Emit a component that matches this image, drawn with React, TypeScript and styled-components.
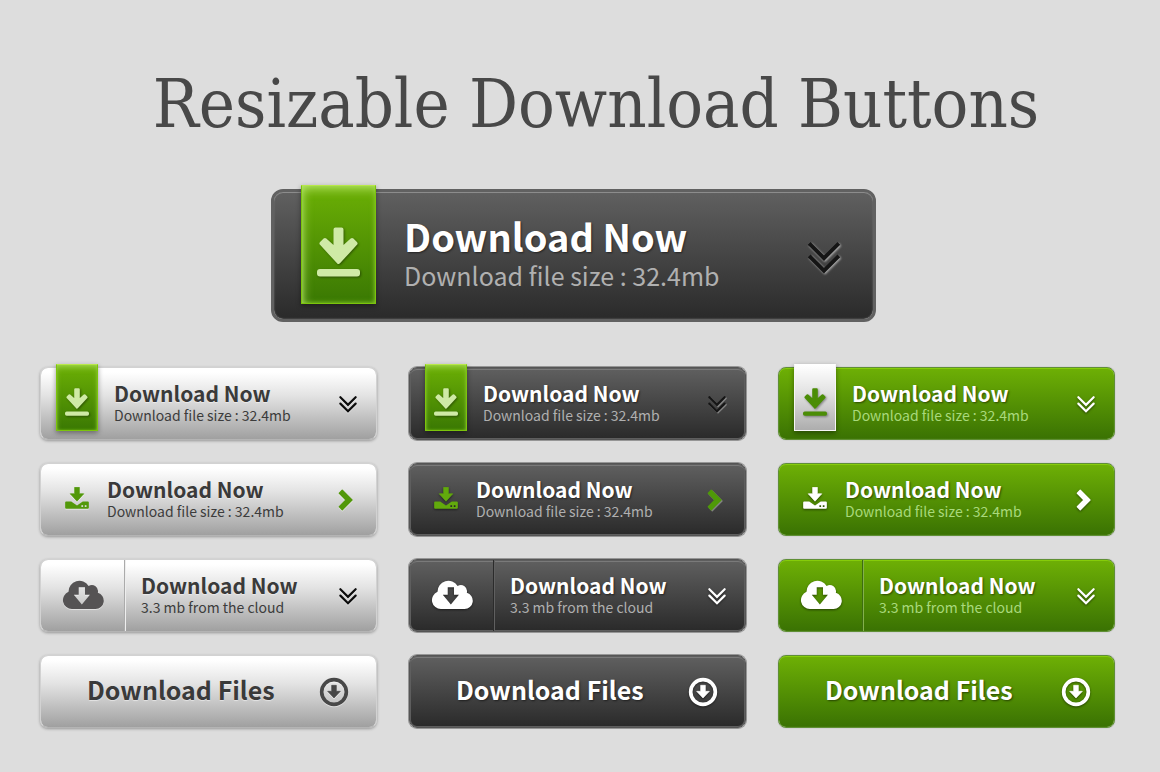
import React from "react";
import styled, { createGlobalStyle, css } from "styled-components";

type Tone = "silver" | "dark" | "green";

const GlobalStyle = createGlobalStyle`
  *, *::before, *::after { box-sizing: border-box; }
  body { margin: 0; background: #dddddd; }
`;

const Page = styled.main`
  min-height: 100vh;
  padding: 64px 0 44px;
  background: #dddddd;
  font-family: "Noto Sans CJK JP", "Noto Sans", sans-serif;
`;

const Heading = styled.h1`
  margin: 0;
  padding-left: 32px;
  font-family: "DejaVu Serif Condensed", "DejaVu Serif", serif;
  font-size: 68px;
  line-height: 80px;
  font-weight: 400;
  text-align: center;
  color: #484848;
`;

const HeroArea = styled.section`
  display: flex;
  justify-content: center;
  padding: 45px 13px 0 0;
`;

const Grid = styled.section`
  display: grid;
  grid-template-columns: repeat(3, 1fr);
  gap: 32px;
  padding: 45px 45px 0 40px;
`;

const Column = styled.div`
  display: flex;
  flex-direction: column;
  gap: 23px;
`;

const surfaces = {
  silver: css`
    border: 1px solid #d2d2d2;
    border-bottom-color: #b4b4b4;
    background: linear-gradient(#ffffff 6%, #e2e2e2 40%, #a0a0a0) padding-box;
    box-shadow: 0 1px 3px rgba(0, 0, 0, 0.32);
  `,
  dark: css`
    border: 1px solid #555555;
    background: linear-gradient(#606060, #2a2a2a) padding-box;
    box-shadow: inset 0 0 0 1px #5e5e5e, inset 0 2px 0 #7a7a7a, 0 0 0 1px rgba(80, 80, 80, 0.5);
  `,
  green: css`
    border: 1px solid #5f8f35;
    background: linear-gradient(#6eb005, #3a7203) padding-box;
    box-shadow: inset 0 1px 0 #86cc0a, inset 0 0 1px #79b13c, 0 0 1px rgba(0, 0, 0, 0.4);
  `,
};

const Button = styled.button<{ $tone: Tone; $large?: boolean }>`
  display: flex;
  align-items: center;
  width: ${(p) => (p.$large ? "605px" : "100%")};
  height: ${(p) => (p.$large ? "133px" : "73px")};
  padding: 0;
  border-radius: 8px;
  font-family: inherit;
  text-align: left;
  cursor: pointer;
  ${(p) => surfaces[p.$tone]}
  ${(p) =>
    p.$large &&
    css`
      border: 3px solid #616161;
      border-radius: 12px;
      box-shadow: inset 0 1px 0 #8c8c8c, inset 0 0 2px #777777;
    `}
`;

const Ribbon = styled.span<{ $light?: boolean; $large?: boolean }>`
  display: flex;
  flex: none;
  justify-content: center;
  align-self: flex-start;
  width: ${(p) => (p.$large ? "75px" : "42px")};
  height: ${(p) => (p.$large ? "119px" : "67px")};
  margin: ${(p) => (p.$large ? "-7px 0 0 27px" : "-4px 0 0 15px")};
  padding-top: ${(p) => (p.$large ? "41px" : "23px")};
  border: 1px solid ${(p) => (p.$light ? "#f6f6f6" : "#7cc40c")};
  border-top-color: ${(p) => (p.$light ? "#ffffff" : "#b8e84a")};
  color: ${(p) => (p.$light ? "#4b8d06" : "#cfeaa6")};
  background: ${(p) =>
    p.$light
      ? "linear-gradient(#ffffff, #e4e4e4 40%, #adadad)"
      : "linear-gradient(#6cb005, #3a7803)"};
  box-shadow:
    ${(p) => (p.$light ? "" : p.$large
      ? "inset 0 8px 10px -4px rgba(200,240,130,.6), inset 6px 0 10px -4px rgba(190,235,120,.6), inset 0 0 4px #7cc814,"
      : "inset 0 4px 6px -2px rgba(200,240,130,.6), inset 0 0 3px #74be10,")}
    0 2px 5px rgba(0, 0, 0, 0.4);
`;

const DriveSlot = styled.span`
  display: flex;
  flex: none;
  margin-left: 24px;
  padding-bottom: 3px;
`;

const CloudSlot = styled.span<{ $tone: Tone }>`
  display: flex;
  flex: none;
  align-items: center;
  justify-content: center;
  align-self: stretch;
  width: 84px;
  padding: 0 0 4px 2px;
  border-right: 1px solid
    ${(p) => ({ silver: "#ababab", dark: "#2b2b2b", green: "#3d6e10" })[p.$tone]};
  box-shadow: 1px 0 0
    ${(p) => ({ silver: "#eeeeee", dark: "#606060", green: "#83b14c" })[p.$tone]};
`;

const Labels = styled.span<{ $gap: number; $lift?: number }>`
  display: flex;
  flex: 1;
  flex-direction: column;
  padding: 0 0 ${(p) => p.$lift ?? 2}px ${(p) => p.$gap}px;
`;

const titleTone = {
  silver: css`color: #3a3a3a; text-shadow: 0 1px 1px rgba(255, 255, 255, 0.5);`,
  dark: css`color: #ffffff; text-shadow: 1px 1px 2px rgba(0, 0, 0, 0.5);`,
  green: css`color: #ffffff; text-shadow: 1px 1px 2px rgba(0, 0, 0, 0.5);`,
};

const Title = styled.span<{ $tone: Tone; $size: number }>`
  font-size: ${(p) => p.$size}px;
  line-height: ${(p) => (p.$size > 30 ? 42 : 24)}px;
  font-weight: 700;
  white-space: nowrap;
  ${(p) => titleTone[p.$tone]}
`;

const Detail = styled.span<{ $tone: Tone; $size: number }>`
  font-size: ${(p) => p.$size}px;
  line-height: ${(p) => (p.$size > 20 ? 36 : 20)}px;
  white-space: nowrap;
  color: ${(p) => ({ silver: "#3c3c3c", dark: "#b0b0b0", green: "#a9d97c" })[p.$tone]};
`;

const Tinted = styled.span<{ $color: string; $shade: string }>`
  display: flex;
  flex: none;
  color: ${(p) => p.$color};
  filter: drop-shadow(${(p) => p.$shade});
`;

const Trail = styled(Tinted)<{ $right: number; $drop?: number }>`
  margin-right: ${(p) => p.$right}px;
  padding-top: ${(p) => p.$drop ?? 0}px;
`;

const Svg = styled.svg`
  display: block;
  flex: none;
  overflow: visible;
`;

const ShadedSvg = styled(Svg)`
  filter: drop-shadow(1px 1px 1px rgba(0, 0, 0, 0.4));
`;

const ArrowToBar = ({ large }: { large?: boolean }) => (
  <ShadedSvg width={large ? 43 : 24} height={large ? 50 : 28} viewBox="0 0 43 50" fill="currentColor" aria-hidden="true">
    <path d="M18.500 2.500h6v20L35 13l3.500 3.500-17 18.500-17-18.500L8 13l10.500 9.500z" stroke="currentColor" strokeWidth="4" strokeLinejoin="round" />
    <rect y="42" width="43" height="7.500" rx="3" />
  </ShadedSvg>
);

const Drive = () => (
  <Svg width="24" height="22" viewBox="0 0 70 65" fill="currentColor" aria-hidden="true">
    <path d="M28 1h14v19h13L35 42 15 20h13z" stroke="currentColor" strokeWidth="2" strokeLinejoin="round" />
    <path fillRule="evenodd" d="M3 43h15l17 12 17-12h15q3 0 3 3v15q0 3-3 3H3q-3 0-3-3V46q0-3 3-3zM48 54h5v5h-5zM58 54h5v5h-5z" />
  </Svg>
);

const Cloud = () => (
  <Svg width="41" height="30" viewBox="0 0 123 91" fill="currentColor" aria-hidden="true">
    <path fillRule="evenodd" d="M27 91A27 27 0 0 1 16 39A33 33 0 0 1 77 21A19 19 0 0 1 105 42A25 25 0 0 1 98 91ZM47 25h19v23h15L56.500 77 32 48h15z" />
  </Svg>
);

const DoubleChevron = ({ large }: { large?: boolean }) => (
  <Svg width={large ? 34 : 18} height={large ? 33 : 17} viewBox="0 0 102 100" fill="none"
    stroke="currentColor" strokeWidth={large ? 12 : 13} strokeLinecap={large ? "butt" : "round"} aria-hidden="true">
    <path d="M6 7l45 45L96 7M6 45l45 45 45-45" />
  </Svg>
);

const ChevronRight = () => (
  <Svg width="15" height="22" viewBox="0 0 44 64" fill="currentColor" aria-hidden="true">
    <path d="M12.500 3.500L41 32 12.500 60.500 4 52l19.500-20L4 12z" stroke="currentColor" strokeWidth="4" strokeLinejoin="round" />
  </Svg>
);

const CircleArrow = () => (
  <Svg width="28" height="28" viewBox="0 0 84 84" fill="currentColor" aria-hidden="true">
    <circle cx="42" cy="42" r="37" fill="none" stroke="currentColor" strokeWidth="11" />
    <path d="M35 22h14v18h12L42 60 23 40h12z" stroke="currentColor" strokeWidth="2" strokeLinejoin="round" />
  </Svg>
);

const whiteShade = "0 1px 0 rgba(255,255,255,.5)";
const blackShade = "0 1px 1px rgba(0,0,0,.5)";
const edgeShade = "1px 1px 0 rgba(255,255,255,.35)";

const palette = {
  silver: { chevron: "#0c0c0c", topChevron: "#0c0c0c", arrow: "#52980a", drive: "#52980a", cloud: "#555354", ring: "#484848", shade: whiteShade, topShade: whiteShade },
  dark: { chevron: "#ffffff", topChevron: "#151515", arrow: "#4f9a08", drive: "#62aa0c", cloud: "#ffffff", ring: "#ffffff", shade: blackShade, topShade: edgeShade },
  green: { chevron: "#ffffff", topChevron: "#ffffff", arrow: "#ffffff", drive: "#ffffff", cloud: "#ffffff", ring: "#ffffff", shade: blackShade, topShade: blackShade },
};

const ButtonSet = ({ tone }: { tone: Tone }) => {
  const c = palette[tone];
  return (
    <Column>
      <Button type="button" $tone={tone}>
        <Ribbon $light={tone === "green"}><ArrowToBar /></Ribbon>
        <Labels $gap={16}>
          <Title $tone={tone} $size={21}>Download Now</Title>
          <Detail $tone={tone} $size={14}>Download file size : 32.4mb</Detail>
        </Labels>
        <Trail $right={19} $drop={2} $color={c.topChevron} $shade={c.topShade}><DoubleChevron /></Trail>
      </Button>
      <Button type="button" $tone={tone}>
        <DriveSlot>
          <Tinted $color={c.drive} $shade={c.shade}><Drive /></Tinted>
        </DriveSlot>
        <Labels $gap={18}>
          <Title $tone={tone} $size={21}>Download Now</Title>
          <Detail $tone={tone} $size={14}>Download file size : 32.4mb</Detail>
        </Labels>
        <Trail $right={23} $color={c.arrow} $shade={c.topShade}><ChevronRight /></Trail>
      </Button>
      <Button type="button" $tone={tone}>
        <CloudSlot $tone={tone}>
          <Tinted $color={c.cloud} $shade={c.shade}><Cloud /></Tinted>
        </CloudSlot>
        <Labels $gap={16}>
          <Title $tone={tone} $size={21}>Download Now</Title>
          <Detail $tone={tone} $size={14}>3.3 mb from the cloud</Detail>
        </Labels>
        <Trail $right={19} $drop={2} $color={c.chevron} $shade={c.shade}><DoubleChevron /></Trail>
      </Button>
      <Button type="button" $tone={tone}>
        <Labels $gap={46} $lift={5}>
          <Title $tone={tone} $size={25}>Download Files</Title>
        </Labels>
        <Trail $right={tone === "green" ? 24 : 28} $color={c.ring} $shade={c.shade}><CircleArrow /></Trail>
      </Button>
    </Column>
  );
};

export default function App() {
  return (
    <>
      <GlobalStyle />
      <Page>
        <Heading>Resizable Download Buttons</Heading>
        <HeroArea>
          <Button type="button" $tone="dark" $large>
            <Ribbon $large><ArrowToBar large /></Ribbon>
            <Labels $gap={28} $lift={4}>
              <Title $tone="dark" $size={38}>Download Now</Title>
              <Detail $tone="dark" $size={25}>Download file size : 32.4mb</Detail>
            </Labels>
            <Trail $right={32} $drop={4} $color="#151515" $shade="1px 1px 1px rgba(255,255,255,.6)">
              <DoubleChevron large />
            </Trail>
          </Button>
        </HeroArea>
        <Grid>
          <ButtonSet tone="silver" />
          <ButtonSet tone="dark" />
          <ButtonSet tone="green" />
        </Grid>
      </Page>
    </>
  );
}
